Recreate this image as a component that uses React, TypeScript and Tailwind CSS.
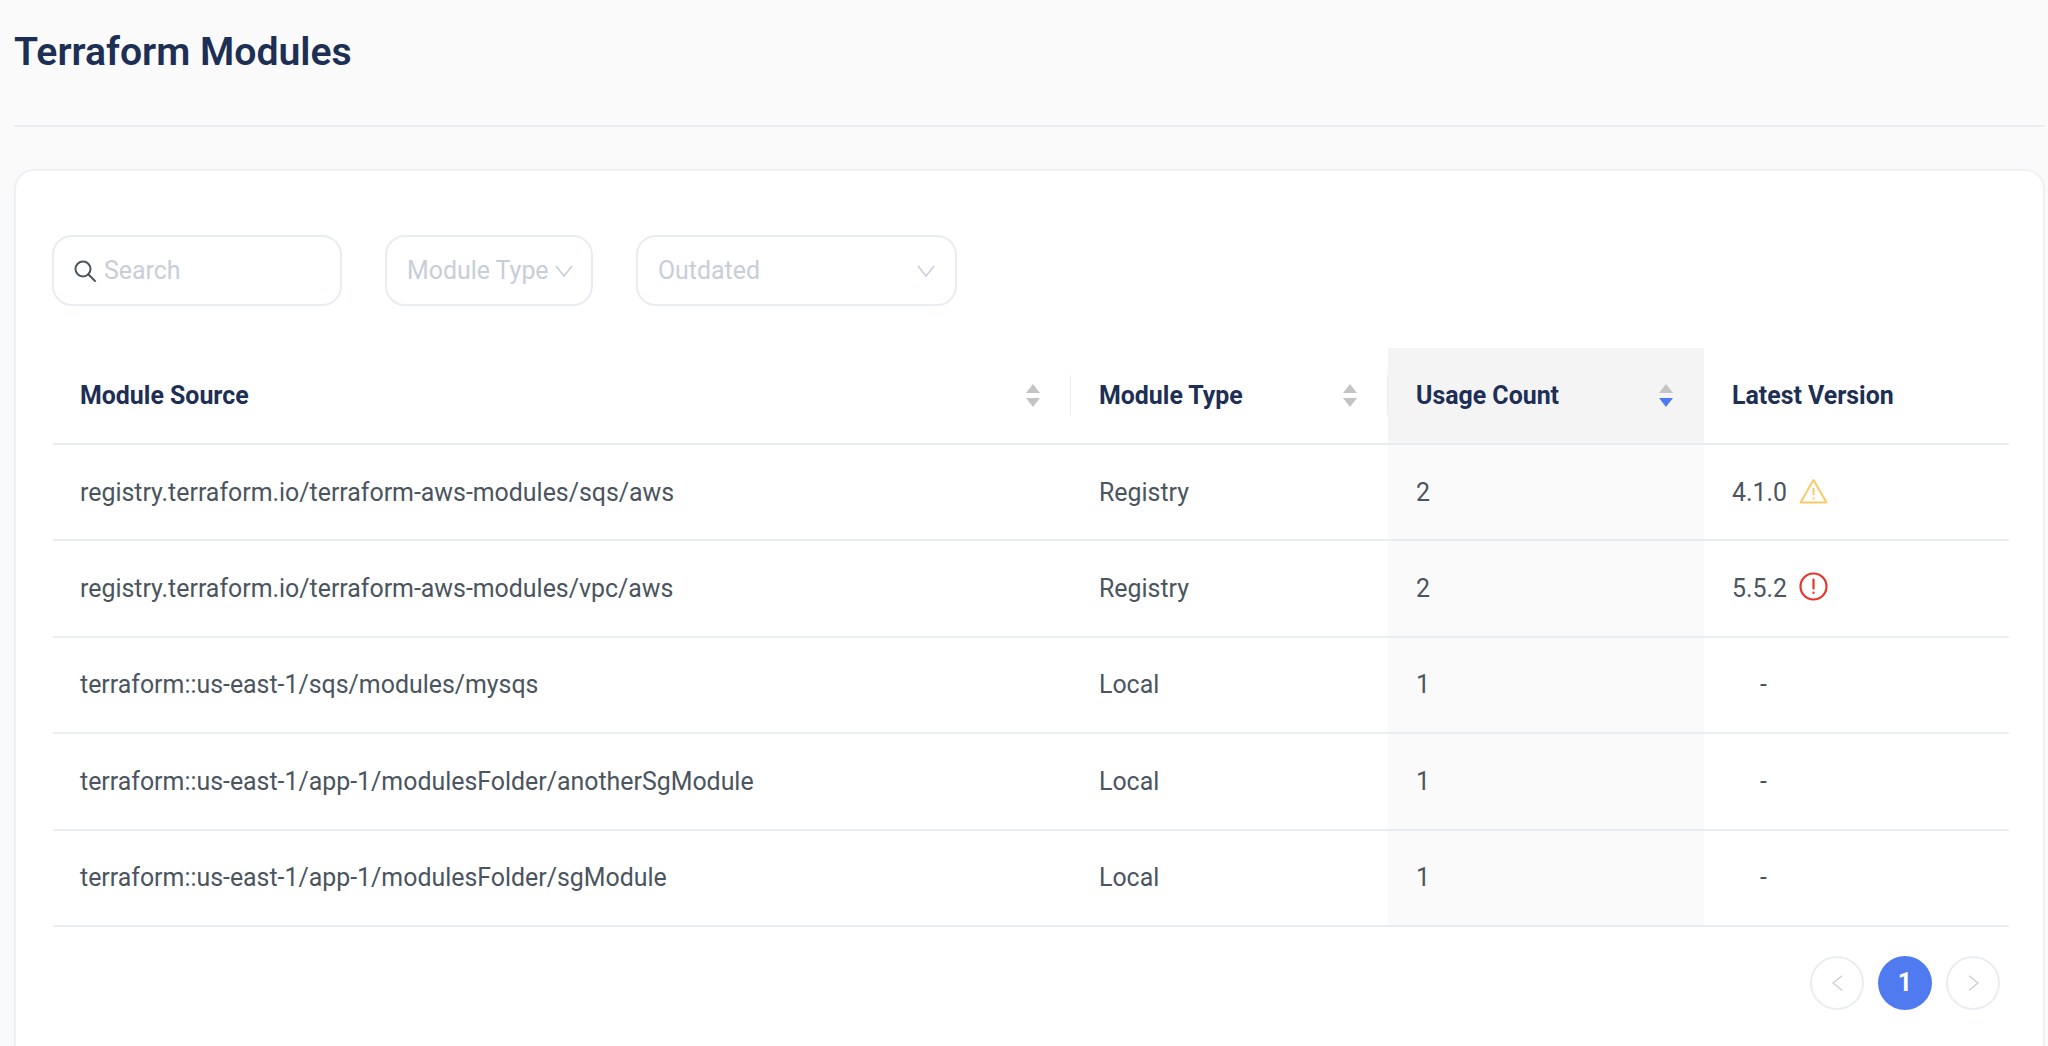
import * as React from "react"

type Row = {
  source: string
  type: string
  count: number
  version?: string
  status?: "warning" | "error"
}

const rows: Row[] = [
  { source: "registry.terraform.io/terraform-aws-modules/sqs/aws", type: "Registry", count: 2, version: "4.1.0", status: "warning" },
  { source: "registry.terraform.io/terraform-aws-modules/vpc/aws", type: "Registry", count: 2, version: "5.5.2", status: "error" },
  { source: "terraform::us-east-1/sqs/modules/mysqs", type: "Local", count: 1 },
  { source: "terraform::us-east-1/app-1/modulesFolder/anotherSgModule", type: "Local", count: 1 },
  { source: "terraform::us-east-1/app-1/modulesFolder/sgModule", type: "Local", count: 1 },
]

function SortIcon({ active }: { active?: boolean }) {
  return (
    <svg width="16" height="24" viewBox="0 0 16 24" className="shrink-0">
      <path d="M8 1 L15 10 L1 10 Z" fill="#c4c4c4" />
      <path d="M1 15 L15 15 L8 24 Z" fill={active ? "#4f7af0" : "#c4c4c4"} />
    </svg>
  )
}

function Chevron({ dir, className }: { dir: "down" | "left" | "right"; className: string }) {
  const d = dir === "down" ? "M2 3 L10 13 L18 3" : dir === "left" ? "M12 2 L2 10 L12 18" : "M2 2 L12 10 L2 18"
  const box = dir === "down" ? "0 0 20 16" : "0 0 14 20"
  return (
    <svg viewBox={box} className={className} fill="none" stroke="currentColor" strokeWidth="1.5">
      <path d={d} />
    </svg>
  )
}

function Th({ label, width, active, sort, divider, first }: { label: string; width: string; active?: boolean; sort?: boolean; divider?: boolean; first?: boolean }) {
  return (
    <th className={`${width} h-[96px] p-0 border-b-2 border-[#e9edf3] text-left font-bold ${active ? "bg-[#f4f4f5]" : ""}`}>
      <div className={`relative flex items-center justify-between pr-[30px] ${first ? "pl-[27px]" : "pl-7"}`}>
        <span>{label}</span>
        {sort && <SortIcon active={active} />}
        {divider && <span className="absolute right-0 top-1/2 h-10 w-px -translate-y-1/2 bg-[#ececec]" />}
      </div>
    </th>
  )
}

export default function App() {
  return (
    <div className="h-[1046px] overflow-hidden bg-[#fafafa] pl-[14px] pr-[3px] font-['Roboto',sans-serif] text-[#4a5560]">
      <h1 className="h-[127px] border-b-2 border-[#ebedf0] pt-[27px] text-[39.2px] font-semibold leading-[50px] text-[#1e2f55]">
        Terraform Modules
      </h1>
      <div className="mt-[42px] h-[900px] rounded-t-[20px] border-2 border-[#edf0f5] bg-white pl-[37px] pt-[64px]">
        <div className="-ml-px flex items-center gap-[43px] text-[24.9px] text-[#c8ced8]">
          <div className="flex h-[71px] w-[290px] items-center gap-[6px] rounded-[20px] border-2 border-[#e9edf3] pl-[18px]">
            <svg width="26" height="26" viewBox="0 0 26 26" fill="none" stroke="#4a5560" strokeWidth="2" strokeLinecap="round" className="shrink-0">
              <circle cx="11" cy="11" r="7.5" />
              <path d="M16.5 16.5 L23 23" />
            </svg>
            <span>Search</span>
          </div>
          <div className="flex h-[71px] w-[208px] items-center gap-[5px] rounded-[20px] border-2 border-[#e9edf3] pl-[20px]">
            <span className="whitespace-nowrap">Module Type</span>
            <Chevron dir="down" className="h-[16px] w-[20px] shrink-0" />
          </div>
          <div className="flex h-[71px] w-[321px] items-center justify-between rounded-[20px] border-2 border-[#e9edf3] pl-[20px] pr-[19px]">
            <span>Outdated</span>
            <Chevron dir="down" className="h-[16px] w-[20px] shrink-0" />
          </div>
        </div>
        <table className="mt-[42px] w-[1956px] table-fixed border-collapse text-[24.9px]">
          <thead className="text-[#1e2f55]">
            <tr>
              <Th label="Module Source" width="w-[1018px]" sort divider first />
              <Th label="Module Type" width="w-[317px]" sort divider />
              <Th label="Usage Count" width="w-[316px]" sort active />
              <Th label="Latest Version" width="w-[305px]" />
            </tr>
          </thead>
          <tbody>
            {rows.map((row) => (
              <tr key={row.source} className="h-[96.4px] border-b-2 border-[#e9edf3]">
                <td className="pl-[27px]">{row.source}</td>
                <td className="pl-7">{row.type}</td>
                <td className="bg-[#fafafa] pl-7">{row.count}</td>
                <td className="pl-7">
                  {row.version ? (
                    <div className="flex items-center gap-[12px]">
                      <span>{row.version}</span>
                      {row.status === "warning" ? (
                        <svg width="29" height="26" viewBox="0 0 29 26" fill="none" stroke="#f8ca68" strokeWidth="2" strokeLinejoin="round" className="mt-[-3px]">
                          <path d="M14.5 2 L27.5 24.5 L1.5 24.5 Z" />
                          <path d="M14.5 10 V17 M14.5 19.5 V21.5" />
                        </svg>
                      ) : (
                        <svg width="29" height="29" viewBox="0 0 29 29" fill="none" stroke="#e8352b" strokeWidth="2.2" strokeLinecap="round" className="mt-[-4px]">
                          <circle cx="14.5" cy="14.5" r="13" />
                          <path d="M14.5 7.5 V16.5 M14.5 20.5 V21" />
                        </svg>
                      )}
                    </div>
                  ) : (
                    <span className="pl-[28px]">-</span>
                  )}
                </td>
              </tr>
            ))}
          </tbody>
        </table>
        <div className="mt-[29px] flex w-[1956px] justify-end gap-[14px] pr-[9px]">
          <div className="flex h-[54px] w-[54px] items-center justify-center rounded-full border-2 border-[#e9edf3] text-[#cfcfcf]">
            <Chevron dir="left" className="h-[18px] w-[13px]" />
          </div>
          <div className="flex h-[54px] w-[54px] items-center justify-center rounded-full bg-[#4f7af0] text-[24.9px] font-bold text-white">
            1
          </div>
          <div className="flex h-[54px] w-[54px] items-center justify-center rounded-full border-2 border-[#e9edf3] text-[#cfcfcf]">
            <Chevron dir="right" className="h-[18px] w-[13px]" />
          </div>
        </div>
      </div>
    </div>
  )
}
